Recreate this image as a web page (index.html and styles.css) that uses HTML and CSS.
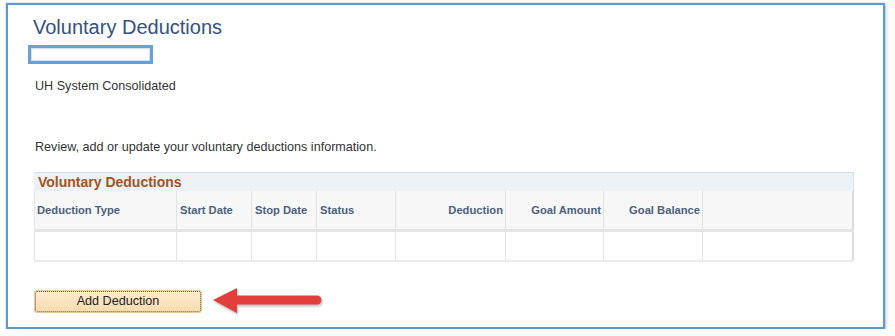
FILE: index.html
```html
<!DOCTYPE html>
<html lang="en">
<head>
<meta charset="UTF-8">
<title>Voluntary Deductions</title>
<link rel="stylesheet" href="styles.css">
</head>
<body>

<div class="frame">
    <h1 class="page-title">Voluntary Deductions</h1>
    <div class="focus-box"></div>
    <p class="company">UH System Consolidated</p>
    <p class="intro">Review, add or update your voluntary deductions information.</p>

    <div class="grid">
        <div class="grid-title">Voluntary Deductions</div>
        <table>
            <colgroup>
                <col style="width: 142px">
                <col style="width: 75px">
                <col style="width: 65px">
                <col style="width: 79px">
                <col style="width: 110px">
                <col style="width: 98px">
                <col style="width: 99px">
                <col>
            </colgroup>
            <thead>
                <tr>
                    <th>Deduction Type</th>
                    <th>Start Date</th>
                    <th>Stop Date</th>
                    <th>Status</th>
                    <th class="num">Deduction</th>
                    <th class="num">Goal Amount</th>
                    <th class="num">Goal Balance</th>
                    <th></th>
                </tr>
            </thead>
            <tbody>
                <tr>
                    <td></td><td></td><td></td><td></td><td></td><td></td><td></td><td></td>
                </tr>
            </tbody>
        </table>
    </div>

    <div class="actions">
        <button class="add-button">Add Deduction</button>
        <svg class="arrow" width="114" height="30" viewBox="0 0 114 30">
            <line x1="24" y1="14" x2="106" y2="14" stroke="#e23e3c" stroke-width="9" stroke-linecap="round"/>
            <polygon points="2,14 26,2 26,27" fill="#e23e3c"/>
        </svg>
    </div>
</div>

</body>
</html>
```

FILE: styles.css
```css
body {
    margin: 0;
    background: #fff;
    font-family: "Liberation Sans", Arial, sans-serif;
    color: #333;
}

.frame {
    box-sizing: border-box;
    width: 879px;
    height: 326px;
    margin: 3px 0 0 6px;
    padding: 10px 0 0 20px;
    border: 2px solid #5b9bd5;
    box-shadow: 0 0 2px rgba(91, 155, 213, 0.6), 2px 2px 3px rgba(0, 0, 0, 0.12);
}

.page-title {
    margin: 0 0 0 5px;
    font-size: 20px;
    line-height: 24px;
    font-weight: normal;
    color: #33527f;
}

.focus-box {
    box-sizing: border-box;
    width: 125px;
    height: 19px;
    margin-top: 6px;
    border: 3px solid #6aa0da;
    box-shadow: inset 0 0 1px 1px #cfe0f3;
}

.company, .intro {
    margin: 0 0 0 7px;
    font-size: 12.6px;
    line-height: 15px;
}

.company {
    margin-top: 15px;
}

.intro {
    margin-top: 46px;
}

.grid {
    width: 820px;
    margin: 17px 0 0 6px;
}

.grid-title {
    height: 18px;
    line-height: 18px;
    padding-left: 4px;
    background: #eef2f5;
    border-top: 1px solid #d9dee4;
    border-right: 1px solid #d9dee4;
    font-size: 14px;
    font-weight: bold;
    color: #a3541d;
}

table {
    width: 820px;
    border-collapse: collapse;
    table-layout: fixed;
}

th {
    height: 38px;
    padding: 0 3px;
    background: #f7f7f7;
    border-right: 1px solid #e1e1e1;
    border-bottom: 3px solid #e4e4e4;
    text-align: left;
    font-size: 11.2px;
    font-weight: bold;
    color: #4b5f7e;
    white-space: nowrap;
}

th:first-child {
    padding-left: 2px;
}

th.num {
    text-align: right;
    padding-right: 2px;
}

td {
    height: 28px;
    padding: 0;
    border-right: 1px solid #e4e4e4;
    border-bottom: 2px solid #ececec;
}

th:first-child, td:first-child {
    border-left: 1px solid #e4e4e4;
}

th:last-child, td:last-child {
    border-right: 2px solid #dcdcdc;
}

.actions {
    display: flex;
    align-items: center;
    margin: 24px 0 0 7px;
}

.add-button {
    box-sizing: border-box;
    width: 166px;
    height: 21px;
    padding: 0;
    background: linear-gradient(#fdebd0, #f8dcae);
    border: 1px dotted #6d5a3e;
    border-radius: 2px;
    box-shadow: 0 0 0 1px #e6c894;
    font-family: "Liberation Sans", Arial, sans-serif;
    font-size: 12.6px;
    color: #222;
    cursor: pointer;
}

.arrow {
    margin-left: 10px;
    filter: drop-shadow(1px 2px 1px rgba(0, 0, 0, 0.25));
}
```
